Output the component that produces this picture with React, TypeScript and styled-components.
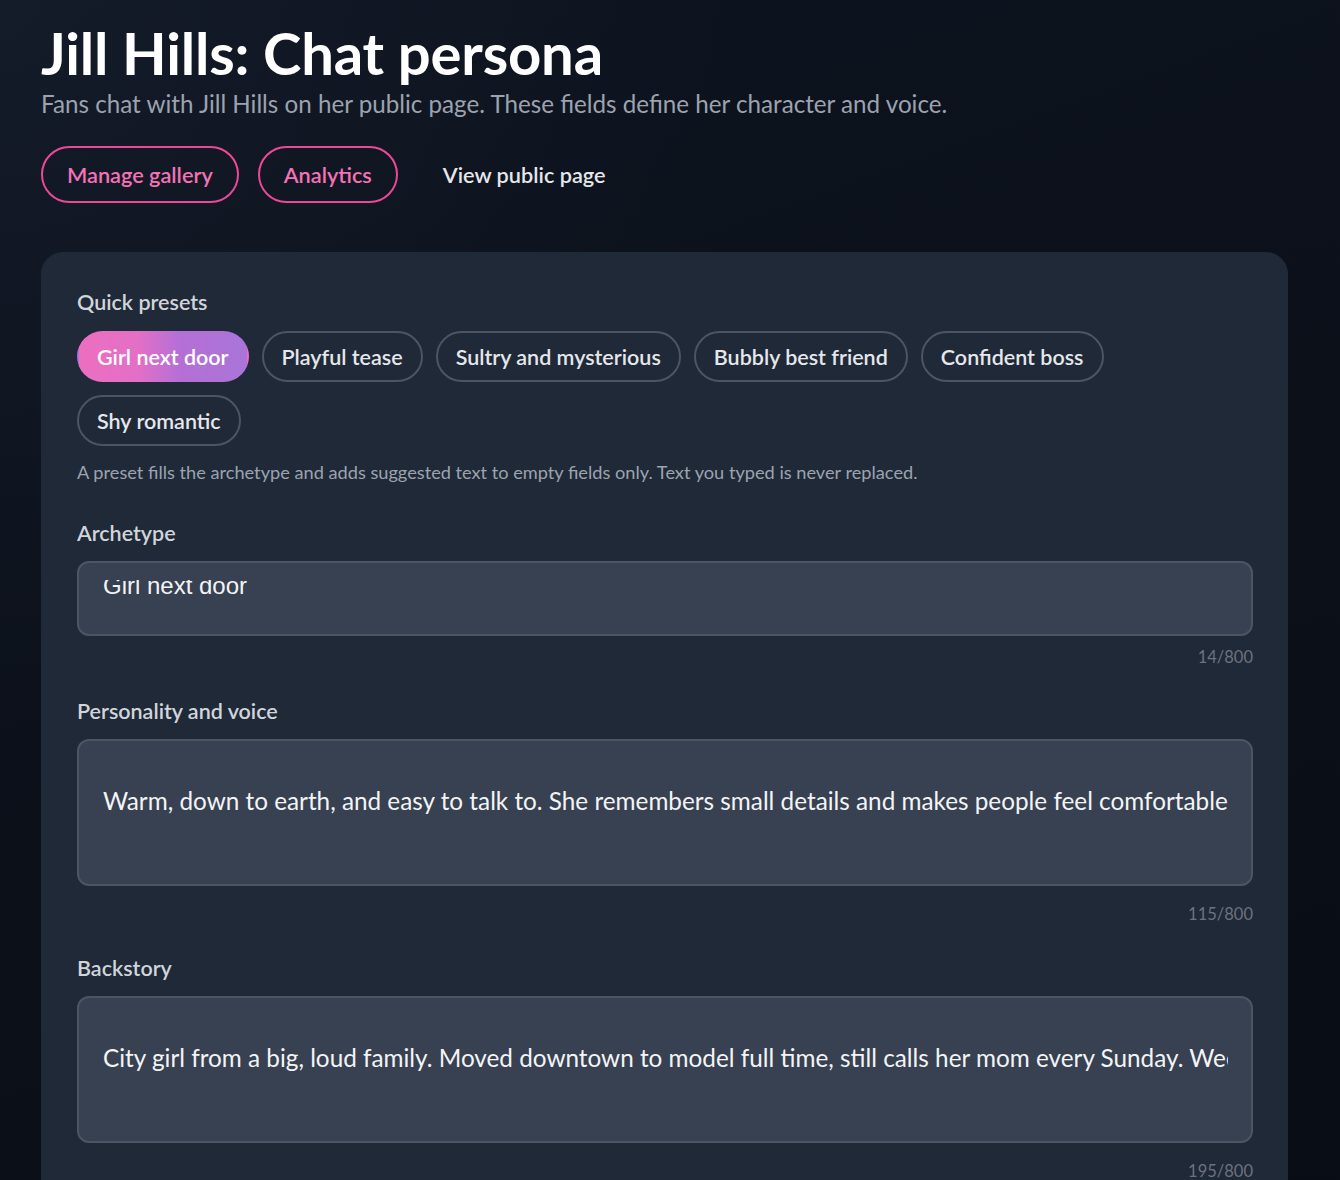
import { createGlobalStyle, styled } from "styled-components";

const GlobalStyle = createGlobalStyle`
  html, body {
    margin: 0;
    padding: 0;
    background: #0a0f1a;
  }
  body {
    font-family: "Segoe UI", Lato, "Noto Sans", sans-serif;
    -webkit-font-smoothing: antialiased;
  }
  * {
    box-sizing: border-box;
  }
`;

const Page = styled.div`
  min-height: 1180px;
  padding: 21px 52px 0 41px;
  background:
    radial-gradient(circle at 0% 0%, rgba(34, 44, 62, 0.3), transparent 40%),
    linear-gradient(160deg, #0e1420 0%, #0b1019 55%, #080c15 100%);
  color: #f3f4f6;
`;

const Title = styled.h1`
  margin: 0;
  font-size: 58px;
  line-height: 64px;
  font-weight: 700;
  color: #ffffff;
  letter-spacing: -0.2px;
`;

const Subtitle = styled.p`
  margin: 3px 0 0;
  font-size: 24.2px;
  line-height: 32px;
  color: #9ca3af;
`;

const Actions = styled.div`
  display: flex;
  align-items: center;
  gap: 19px;
  margin-top: 26px;
`;

const ActionButton = styled.button<{ $outline?: boolean }>`
  height: 57px;
  padding: 0 24px;
  border-radius: 999px;
  border: 2px solid ${({ $outline }) => ($outline ? "#ec4899" : "transparent")};
  background: transparent;
  color: ${({ $outline }) => ($outline ? "#f472b6" : "#e5e7eb")};
  font-family: inherit;
  font-size: 21.7px;
  font-weight: 600;
  cursor: pointer;
`;

const Card = styled.section`
  margin-top: 49px;
  padding: 36px 35px 40px 36px;
  border-radius: 22px;
  background: #1f2937;
`;

const SectionLabel = styled.div`
  font-size: 21.5px;
  line-height: 28px;
  font-weight: 600;
  color: #d1d5db;
`;

const Chips = styled.div`
  display: flex;
  flex-wrap: wrap;
  gap: 13px 13px;
  margin-top: 15px;
`;

const Chip = styled.button<{ $active?: boolean }>`
  height: 51px;
  padding: 0 18px;
  border-radius: 999px;
  border: 2px solid ${({ $active }) => ($active ? "transparent" : "#4b5563")};
  background: ${({ $active }) =>
    $active ? "linear-gradient(90deg, #ec6fbf 0%, #e36fc6 35%, #b56fd6 60%, #a975d8 100%)" : "transparent"};
  color: ${({ $active }) => ($active ? "#ffffff" : "#e5e7eb")};
  font-family: inherit;
  font-size: 21.5px;
  font-weight: 600;
  cursor: pointer;
`;

const Hint = styled.p`
  margin: 13px 0 0;
  font-size: 18.2px;
  line-height: 26px;
  color: #9ca3af;
`;

const Field = styled.div`
  margin-top: 34px;

  & + & {
    margin-top: 28px;
  }
`;

const FieldLabel = styled.label`
  display: block;
  font-size: 21.5px;
  line-height: 28px;
  font-weight: 600;
  color: #d1d5db;
  margin-bottom: 14px;
`;

const Box = styled.div<{ $height: number; $top: number }>`
  height: ${({ $height }) => $height}px;
  padding: ${({ $top }) => $top}px 23px 0 24px;
  border-radius: 12px;
  border: 2px solid #4b5563;
  background: #374151;
  color: #f3f4f6;
`;

const ClipLine = styled.div`
  height: 22px;
  overflow: hidden;
`;

const InputText = styled.span`
  display: block;
  margin-top: -6px;
  font-family: "Liberation Sans", Arial, sans-serif;
  font-size: 24px;
  line-height: 24px;
  white-space: nowrap;
`;

const AreaText = styled.div`
  font-size: 24.3px;
  line-height: 32px;
  white-space: nowrap;
  overflow: hidden;
`;

const Counter = styled.div<{ $gap: number }>`
  margin-top: ${({ $gap }) => $gap}px;
  text-align: right;
  font-size: 16.5px;
  line-height: 24px;
  color: #6b7280;
`;

const presets = [
  "Girl next door",
  "Playful tease",
  "Sultry and mysterious",
  "Bubbly best friend",
  "Confident boss",
  "Shy romantic",
];

const personality =
  "Warm, down to earth, and easy to talk to. She remembers small details and makes people feel comfortable around her.";
const backstory =
  "City girl from a big, loud family. Moved downtown to model full time, still calls her mom every Sunday. Weekends are for farmers markets, long walks, and trying every new coffee spot in the neighborhood.";

export default function App() {
  return (
    <>
      <GlobalStyle />
      <Page>
        <Title>Jill Hills: Chat persona</Title>
        <Subtitle>
          Fans chat with Jill Hills on her public page. These fields define her character and voice.
        </Subtitle>
        <Actions>
          <ActionButton $outline>Manage gallery</ActionButton>
          <ActionButton $outline>Analytics</ActionButton>
          <ActionButton>View public page</ActionButton>
        </Actions>

        <Card>
          <SectionLabel>Quick presets</SectionLabel>
          <Chips>
            {presets.map((p, i) => (
              <Chip key={p} $active={i === 0}>
                {p}
              </Chip>
            ))}
          </Chips>
          <Hint>
            A preset fills the archetype and adds suggested text to empty fields only. Text you typed is never
            replaced.
          </Hint>

          <Field>
            <FieldLabel>Archetype</FieldLabel>
            <Box $height={75} $top={17}>
              <ClipLine>
                <InputText>Girl next door</InputText>
              </ClipLine>
            </Box>
            <Counter $gap={9}>14/800</Counter>
          </Field>

          <Field>
            <FieldLabel>Personality and voice</FieldLabel>
            <Box $height={147} $top={44}>
              <AreaText>{personality}</AreaText>
            </Box>
            <Counter $gap={16}>115/800</Counter>
          </Field>

          <Field>
            <FieldLabel>Backstory</FieldLabel>
            <Box $height={147} $top={44}>
              <AreaText>{backstory}</AreaText>
            </Box>
            <Counter $gap={16}>195/800</Counter>
          </Field>
        </Card>
      </Page>
    </>
  );
}
